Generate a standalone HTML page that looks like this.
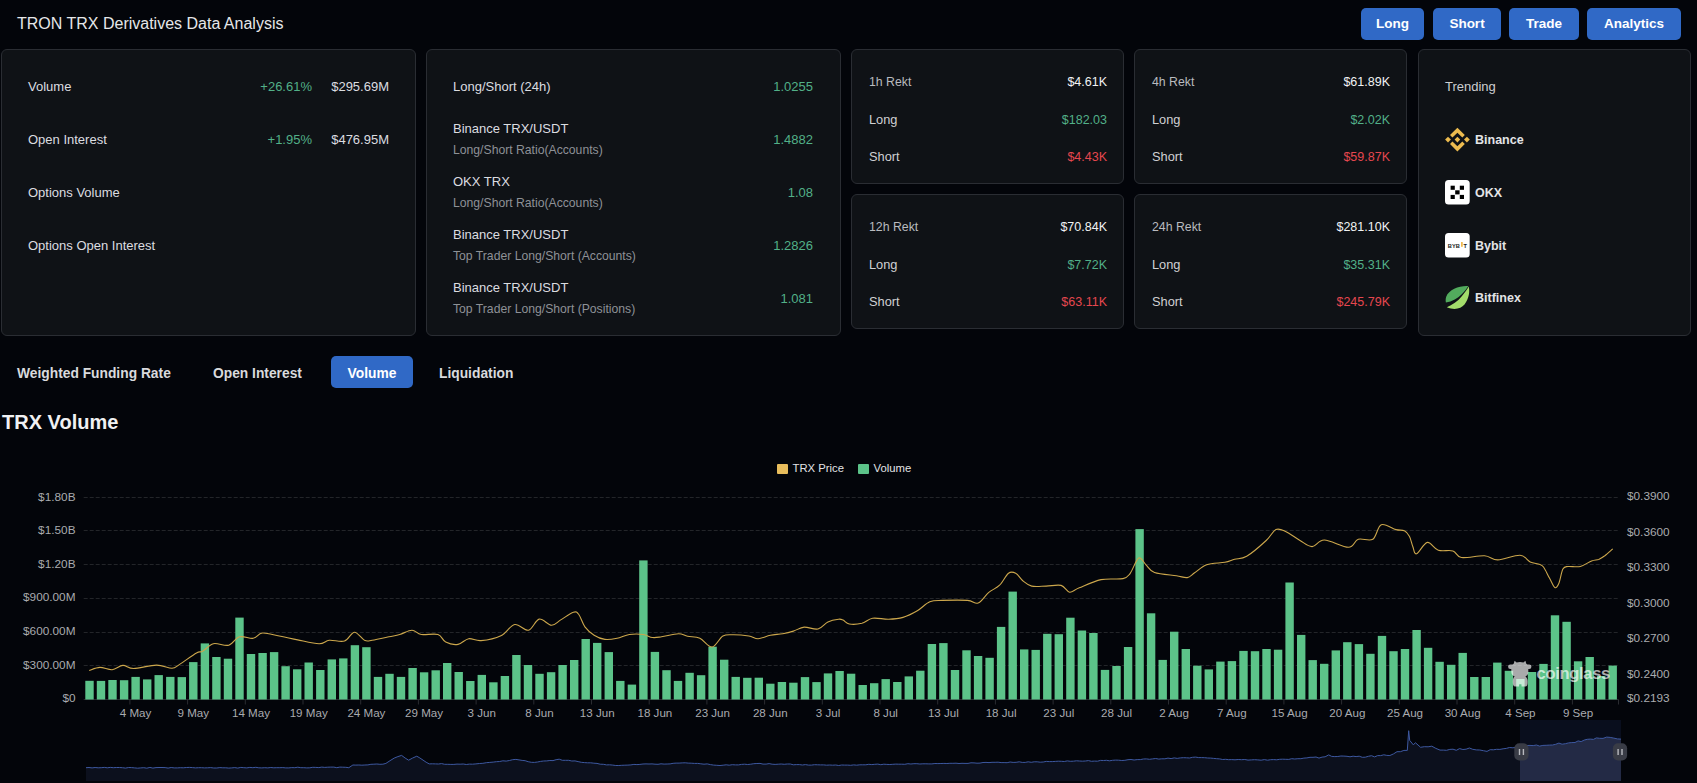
<!DOCTYPE html>
<html><head><meta charset="utf-8">
<style>
*{box-sizing:border-box;margin:0;padding:0}
html,body{width:1697px;height:783px;overflow:hidden;background:#03050a;font-family:"Liberation Sans",sans-serif;color:#dfe0e2}
.abs{position:absolute;white-space:nowrap}
.title{left:17px;top:14px;font-size:16px;color:#e6e7e9;line-height:20px}
.btn{position:absolute;top:8px;height:32px;background:#3069c6;border-radius:5px;color:#fff;font-weight:700;font-size:13.5px;line-height:32px;text-align:center}
.panel{position:absolute;background:#0f1216;border:1px solid #2a2d33;border-radius:6px}
.lbl{font-size:13px;color:#dcdde0;line-height:16px}
.sub{font-size:12.2px;color:#8e9196;line-height:16px}
.grn{color:#52b088}
.red{color:#e5474f}
.r{text-align:right}
.rt{font-size:12.3px;color:#b9bbbf;line-height:16px}
.rl{font-size:12.8px;color:#cfd0d3;line-height:16px}
.rv{font-size:12.5px;line-height:16px;text-align:right}
.wv{color:#f1f2f3}
.tab{position:absolute;top:357.5px;height:32px;line-height:32px;font-size:13.8px;font-weight:700;color:#d9dadd;white-space:nowrap}
.tr{position:absolute;left:1475px;font-size:12.5px;font-weight:700;color:#e3e4e6;line-height:16px}
.ax{position:absolute;font-size:11.8px;color:#a9abaf;line-height:14px;white-space:nowrap}
.axl{width:60px;left:15.5px;text-align:right}
.axr{left:1627px}
.xl{position:absolute;top:705.5px;font-size:11.6px;color:#a9abaf;line-height:14px;white-space:nowrap;width:60px;text-align:center}
</style></head><body>
<div class="abs title">TRON TRX Derivatives Data Analysis</div>
<div class="btn" style="left:1361px;width:63px">Long</div>
<div class="btn" style="left:1433px;width:68px">Short</div>
<div class="btn" style="left:1509px;width:70px">Trade</div>
<div class="btn" style="left:1587px;width:94px">Analytics</div>

<!-- panel 1 -->
<div class="panel" style="left:1px;top:49px;width:415px;height:287px"></div>
<div class="abs lbl" style="left:28px;top:79px">Volume</div>
<div class="abs lbl grn" style="left:200px;width:112px;top:79px;text-align:right">+26.61%</div>
<div class="abs lbl" style="left:300px;width:89px;top:79px;text-align:right">$295.69M</div>
<div class="abs lbl" style="left:28px;top:132px">Open Interest</div>
<div class="abs lbl grn" style="left:200px;width:112px;top:132px;text-align:right">+1.95%</div>
<div class="abs lbl" style="left:300px;width:89px;top:132px;text-align:right">$476.95M</div>
<div class="abs lbl" style="left:28px;top:185px">Options Volume</div>
<div class="abs lbl" style="left:28px;top:238px">Options Open Interest</div>

<!-- panel 2 -->
<div class="panel" style="left:426px;top:49px;width:415px;height:287px"></div>
<div class="abs lbl" style="left:453px;top:79px">Long/Short (24h)</div>
<div class="abs lbl grn r" style="left:700px;width:113px;top:79px">1.0255</div>
<div class="abs lbl" style="left:453px;top:121px">Binance TRX/USDT</div>
<div class="abs sub" style="left:453px;top:142px">Long/Short Ratio(Accounts)</div>
<div class="abs lbl grn r" style="left:700px;width:113px;top:132px">1.4882</div>
<div class="abs lbl" style="left:453px;top:174px">OKX TRX</div>
<div class="abs sub" style="left:453px;top:195px">Long/Short Ratio(Accounts)</div>
<div class="abs lbl grn r" style="left:700px;width:113px;top:185px">1.08</div>
<div class="abs lbl" style="left:453px;top:227px">Binance TRX/USDT</div>
<div class="abs sub" style="left:453px;top:248px">Top Trader Long/Short (Accounts)</div>
<div class="abs lbl grn r" style="left:700px;width:113px;top:238px">1.2826</div>
<div class="abs lbl" style="left:453px;top:280px">Binance TRX/USDT</div>
<div class="abs sub" style="left:453px;top:301px">Top Trader Long/Short (Positions)</div>
<div class="abs lbl grn r" style="left:700px;width:113px;top:291px">1.081</div>

<div class="panel" style="left:851px;top:49px;width:273px;height:135px"></div><div class="abs rt" style="left:869px;top:74.0px">1h Rekt</div><div class="abs rv wv" style="left:907px;width:200px;top:74.0px">$4.61K</div><div class="abs rl" style="left:869px;top:111.6px">Long</div><div class="abs rv grn" style="left:907px;width:200px;top:111.6px">$182.03</div><div class="abs rl" style="left:869px;top:149.2px">Short</div><div class="abs rv red" style="left:907px;width:200px;top:149.2px">$4.43K</div><div class="panel" style="left:1134px;top:49px;width:273px;height:135px"></div><div class="abs rt" style="left:1152px;top:74.0px">4h Rekt</div><div class="abs rv wv" style="left:1190px;width:200px;top:74.0px">$61.89K</div><div class="abs rl" style="left:1152px;top:111.6px">Long</div><div class="abs rv grn" style="left:1190px;width:200px;top:111.6px">$2.02K</div><div class="abs rl" style="left:1152px;top:149.2px">Short</div><div class="abs rv red" style="left:1190px;width:200px;top:149.2px">$59.87K</div><div class="panel" style="left:851px;top:194px;width:273px;height:135px"></div><div class="abs rt" style="left:869px;top:219.0px">12h Rekt</div><div class="abs rv wv" style="left:907px;width:200px;top:219.0px">$70.84K</div><div class="abs rl" style="left:869px;top:256.6px">Long</div><div class="abs rv grn" style="left:907px;width:200px;top:256.6px">$7.72K</div><div class="abs rl" style="left:869px;top:294.2px">Short</div><div class="abs rv red" style="left:907px;width:200px;top:294.2px">$63.11K</div><div class="panel" style="left:1134px;top:194px;width:273px;height:135px"></div><div class="abs rt" style="left:1152px;top:219.0px">24h Rekt</div><div class="abs rv wv" style="left:1190px;width:200px;top:219.0px">$281.10K</div><div class="abs rl" style="left:1152px;top:256.6px">Long</div><div class="abs rv grn" style="left:1190px;width:200px;top:256.6px">$35.31K</div><div class="abs rl" style="left:1152px;top:294.2px">Short</div><div class="abs rv red" style="left:1190px;width:200px;top:294.2px">$245.79K</div>

<!-- trending -->
<div class="panel" style="left:1418px;top:49px;width:273px;height:287px"></div>
<div class="abs lbl" style="left:1445px;top:79px;color:#cdced1">Trending</div>
<svg style="position:absolute;left:1443px;top:125px" width="30" height="30" viewBox="0 0 30 30">
<g fill="#ecbb4f">
<path d="M14.4 2.7 L21.8 10.1 L19.35 12.6 L14.4 7.75 L9.45 12.6 L7 10.1 Z"/>
<path d="M14.4 26.4 L21.8 19.0 L19.35 16.5 L14.4 21.35 L9.45 16.5 L7 19.0 Z"/>
<path d="M5 11.7 L7.9 14.6 L5 17.5 L2.1 14.6 Z"/>
<path d="M23.9 11.7 L26.8 14.6 L23.9 17.5 L21 14.6 Z"/>
<path d="M14.4 11.8 L17.2 14.6 L14.4 17.4 L11.6 14.6 Z"/>
</g></svg>
<div class="tr" style="top:132px">Binance</div>
<svg style="position:absolute;left:1445.1px;top:180.1px" width="25" height="25" viewBox="0 0 25 25">
<rect x="0" y="0" width="24.7" height="24.5" rx="3.5" fill="#fff"/>
<g fill="#000"><rect x="5.6" y="5.7" width="4.2" height="4.1"/><rect x="14.8" y="5.7" width="4.2" height="4.1"/><rect x="10.2" y="10.3" width="4.4" height="4.1"/><rect x="5.6" y="14.9" width="4.2" height="4.1"/><rect x="14.8" y="14.9" width="4.2" height="4.1"/></g>
</svg>
<div class="tr" style="top:184.5px">OKX</div>
<svg style="position:absolute;left:1445.1px;top:233.1px" width="25" height="25" viewBox="0 0 25 25">
<rect x="0" y="0" width="24.7" height="24.5" rx="3.5" fill="#fff"/>
<text x="2.8" y="14.9" font-family="Liberation Sans" font-size="5.6" font-weight="700" fill="#1a1a1a" textLength="12" lengthAdjust="spacingAndGlyphs">BYB</text>
<rect x="16.1" y="9" width="1.6" height="4.8" fill="#f0b43c"/>
<text x="18.4" y="14.9" font-family="Liberation Sans" font-size="5.6" font-weight="700" fill="#1a1a1a">T</text>
</svg>
<div class="tr" style="top:237.5px">Bybit</div>
<svg style="position:absolute;left:1443px;top:283px" width="30" height="30" viewBox="0 0 30 30">
<path d="M25.3 3.1 C17 2.5 6 6 3.1 14 C2.5 16 2.6 18 2.9 19.6 C9 18.5 15 15.5 19 11 C22 8 24 5.5 25.3 3.1 Z" fill="#52ab5d"/>
<path d="M25.7 3.6 C26.8 8 26.5 15 21.5 21.5 C18 25.5 12 27.5 3.8 24.3 C9 22 15 18.5 19 13 C22 9.5 24.5 6 25.7 3.6 Z" fill="#a3dd6b"/>
</svg>
<div class="tr" style="top:290px">Bitfinex</div>

<!-- tabs -->
<div class="tab" style="left:17px">Weighted Funding Rate</div>
<div class="tab" style="left:213px">Open Interest</div>
<div class="abs" style="left:331px;top:356px;width:82px;height:32px;background:#3069c6;border-radius:5px"></div><div class="tab" style="left:331px;width:82px;color:#fff;text-align:center">Volume</div>
<div class="tab" style="left:439px">Liquidation</div>
<div class="abs" style="left:2px;top:408px;font-size:20px;font-weight:700;color:#f0f1f3;line-height:28px">TRX Volume</div>

<!-- legend -->
<div class="abs" style="left:777px;top:463.5px;width:10.5px;height:10.5px;background:#e8bd5c;border-radius:1px"></div>
<div class="abs" style="left:792.5px;top:461px;font-size:11.3px;color:#e2e3e5;line-height:14px">TRX Price</div>
<div class="abs" style="left:858px;top:463.5px;width:10.5px;height:10.5px;background:#5cc389;border-radius:1px"></div>
<div class="abs" style="left:873.5px;top:461px;font-size:11.3px;color:#e2e3e5;line-height:14px">Volume</div>

<!-- axes -->
<div class="ax axl" style="top:489.5px">$1.80B</div>
<div class="ax axl" style="top:523px">$1.50B</div>
<div class="ax axl" style="top:556.5px">$1.20B</div>
<div class="ax axl" style="top:590px">$900.00M</div>
<div class="ax axl" style="top:623.5px">$600.00M</div>
<div class="ax axl" style="top:657.5px">$300.00M</div>
<div class="ax axl" style="top:691px">$0</div>
<div class="ax axr" style="top:489px">$0.3900</div>
<div class="ax axr" style="top:524.5px">$0.3600</div>
<div class="ax axr" style="top:560px">$0.3300</div>
<div class="ax axr" style="top:595.5px">$0.3000</div>
<div class="ax axr" style="top:631px">$0.2700</div>
<div class="ax axr" style="top:666.5px">$0.2400</div>
<div class="ax axr" style="top:691px">$0.2193</div>

<svg width="1697" height="783" style="position:absolute;left:0;top:0">
<line x1="83.7" y1="497.5" x2="1618.5" y2="497.5" stroke="#232529" stroke-width="1" stroke-dasharray="4,2"/>
<line x1="83.7" y1="530.5" x2="1618.5" y2="530.5" stroke="#232529" stroke-width="1" stroke-dasharray="4,2"/>
<line x1="83.7" y1="564.5" x2="1618.5" y2="564.5" stroke="#232529" stroke-width="1" stroke-dasharray="4,2"/>
<line x1="83.7" y1="598.5" x2="1618.5" y2="598.5" stroke="#232529" stroke-width="1" stroke-dasharray="4,2"/>
<line x1="83.7" y1="632.5" x2="1618.5" y2="632.5" stroke="#232529" stroke-width="1" stroke-dasharray="4,2"/>
<line x1="83.7" y1="665.5" x2="1618.5" y2="665.5" stroke="#232529" stroke-width="1" stroke-dasharray="4,2"/>
<line x1="83.7" y1="699.5" x2="1618.5" y2="699.5" stroke="#2a2c31" stroke-width="1"/>
<line x1="129.9" y1="699.5" x2="129.9" y2="704.5" stroke="#2a2c31" stroke-width="1"/>
<line x1="187.6" y1="699.5" x2="187.6" y2="704.5" stroke="#2a2c31" stroke-width="1"/>
<line x1="245.3" y1="699.5" x2="245.3" y2="704.5" stroke="#2a2c31" stroke-width="1"/>
<line x1="303.0" y1="699.5" x2="303.0" y2="704.5" stroke="#2a2c31" stroke-width="1"/>
<line x1="360.7" y1="699.5" x2="360.7" y2="704.5" stroke="#2a2c31" stroke-width="1"/>
<line x1="418.4" y1="699.5" x2="418.4" y2="704.5" stroke="#2a2c31" stroke-width="1"/>
<line x1="476.1" y1="699.5" x2="476.1" y2="704.5" stroke="#2a2c31" stroke-width="1"/>
<line x1="533.8" y1="699.5" x2="533.8" y2="704.5" stroke="#2a2c31" stroke-width="1"/>
<line x1="591.5" y1="699.5" x2="591.5" y2="704.5" stroke="#2a2c31" stroke-width="1"/>
<line x1="649.2" y1="699.5" x2="649.2" y2="704.5" stroke="#2a2c31" stroke-width="1"/>
<line x1="706.9" y1="699.5" x2="706.9" y2="704.5" stroke="#2a2c31" stroke-width="1"/>
<line x1="764.6" y1="699.5" x2="764.6" y2="704.5" stroke="#2a2c31" stroke-width="1"/>
<line x1="822.3" y1="699.5" x2="822.3" y2="704.5" stroke="#2a2c31" stroke-width="1"/>
<line x1="880.0" y1="699.5" x2="880.0" y2="704.5" stroke="#2a2c31" stroke-width="1"/>
<line x1="937.7" y1="699.5" x2="937.7" y2="704.5" stroke="#2a2c31" stroke-width="1"/>
<line x1="995.4" y1="699.5" x2="995.4" y2="704.5" stroke="#2a2c31" stroke-width="1"/>
<line x1="1053.1" y1="699.5" x2="1053.1" y2="704.5" stroke="#2a2c31" stroke-width="1"/>
<line x1="1110.8" y1="699.5" x2="1110.8" y2="704.5" stroke="#2a2c31" stroke-width="1"/>
<line x1="1168.5" y1="699.5" x2="1168.5" y2="704.5" stroke="#2a2c31" stroke-width="1"/>
<line x1="1226.2" y1="699.5" x2="1226.2" y2="704.5" stroke="#2a2c31" stroke-width="1"/>
<line x1="1283.9" y1="699.5" x2="1283.9" y2="704.5" stroke="#2a2c31" stroke-width="1"/>
<line x1="1341.6" y1="699.5" x2="1341.6" y2="704.5" stroke="#2a2c31" stroke-width="1"/>
<line x1="1399.3" y1="699.5" x2="1399.3" y2="704.5" stroke="#2a2c31" stroke-width="1"/>
<line x1="1457.0" y1="699.5" x2="1457.0" y2="704.5" stroke="#2a2c31" stroke-width="1"/>
<line x1="1514.7" y1="699.5" x2="1514.7" y2="704.5" stroke="#2a2c31" stroke-width="1"/>
<line x1="1572.4" y1="699.5" x2="1572.4" y2="704.5" stroke="#2a2c31" stroke-width="1"/>
<line x1="1618.5" y1="699.5" x2="1618.5" y2="704.5" stroke="#2a2c31" stroke-width="1"/>
<rect x="85.3" y="680.8" width="8.4" height="18.7" fill="#5cc389"/>
<rect x="96.8" y="680.9" width="8.4" height="18.6" fill="#5cc389"/>
<rect x="108.3" y="680.0" width="8.4" height="19.5" fill="#5cc389"/>
<rect x="119.9" y="680.2" width="8.4" height="19.3" fill="#5cc389"/>
<rect x="131.4" y="676.9" width="8.4" height="22.6" fill="#5cc389"/>
<rect x="143.0" y="679.4" width="8.4" height="20.1" fill="#5cc389"/>
<rect x="154.5" y="675.1" width="8.4" height="24.4" fill="#5cc389"/>
<rect x="166.1" y="676.9" width="8.4" height="22.6" fill="#5cc389"/>
<rect x="177.6" y="677.1" width="8.4" height="22.4" fill="#5cc389"/>
<rect x="189.1" y="662.1" width="8.4" height="37.4" fill="#5cc389"/>
<rect x="200.7" y="643.4" width="8.4" height="56.1" fill="#5cc389"/>
<rect x="212.2" y="657.0" width="8.4" height="42.5" fill="#5cc389"/>
<rect x="223.8" y="658.7" width="8.4" height="40.8" fill="#5cc389"/>
<rect x="235.3" y="617.6" width="8.4" height="81.9" fill="#5cc389"/>
<rect x="246.8" y="654.0" width="8.4" height="45.5" fill="#5cc389"/>
<rect x="258.4" y="653.0" width="8.4" height="46.5" fill="#5cc389"/>
<rect x="269.9" y="652.1" width="8.4" height="47.4" fill="#5cc389"/>
<rect x="281.4" y="666.2" width="8.4" height="33.3" fill="#5cc389"/>
<rect x="293.0" y="669.3" width="8.4" height="30.2" fill="#5cc389"/>
<rect x="304.5" y="662.5" width="8.4" height="37.0" fill="#5cc389"/>
<rect x="316.1" y="670.0" width="8.4" height="29.5" fill="#5cc389"/>
<rect x="327.6" y="659.4" width="8.4" height="40.1" fill="#5cc389"/>
<rect x="339.1" y="658.4" width="8.4" height="41.1" fill="#5cc389"/>
<rect x="350.7" y="645.2" width="8.4" height="54.3" fill="#5cc389"/>
<rect x="362.2" y="647.2" width="8.4" height="52.3" fill="#5cc389"/>
<rect x="373.8" y="676.9" width="8.4" height="22.6" fill="#5cc389"/>
<rect x="385.3" y="673.8" width="8.4" height="25.7" fill="#5cc389"/>
<rect x="396.8" y="676.9" width="8.4" height="22.6" fill="#5cc389"/>
<rect x="408.4" y="668.0" width="8.4" height="31.5" fill="#5cc389"/>
<rect x="419.9" y="672.3" width="8.4" height="27.2" fill="#5cc389"/>
<rect x="431.5" y="670.3" width="8.4" height="29.2" fill="#5cc389"/>
<rect x="443.0" y="663.0" width="8.4" height="36.5" fill="#5cc389"/>
<rect x="454.5" y="672.0" width="8.4" height="27.5" fill="#5cc389"/>
<rect x="466.1" y="681.0" width="8.4" height="18.5" fill="#5cc389"/>
<rect x="477.6" y="674.9" width="8.4" height="24.6" fill="#5cc389"/>
<rect x="489.2" y="682.3" width="8.4" height="17.2" fill="#5cc389"/>
<rect x="500.7" y="676.0" width="8.4" height="23.5" fill="#5cc389"/>
<rect x="512.2" y="655.0" width="8.4" height="44.5" fill="#5cc389"/>
<rect x="523.8" y="665.0" width="8.4" height="34.5" fill="#5cc389"/>
<rect x="535.3" y="673.8" width="8.4" height="25.7" fill="#5cc389"/>
<rect x="546.9" y="672.2" width="8.4" height="27.3" fill="#5cc389"/>
<rect x="558.4" y="665.0" width="8.4" height="34.5" fill="#5cc389"/>
<rect x="570.0" y="660.0" width="8.4" height="39.5" fill="#5cc389"/>
<rect x="581.5" y="639.0" width="8.4" height="60.5" fill="#5cc389"/>
<rect x="593.0" y="642.9" width="8.4" height="56.6" fill="#5cc389"/>
<rect x="604.6" y="652.1" width="8.4" height="47.4" fill="#5cc389"/>
<rect x="616.1" y="680.9" width="8.4" height="18.6" fill="#5cc389"/>
<rect x="627.7" y="684.6" width="8.4" height="14.9" fill="#5cc389"/>
<rect x="639.2" y="560.4" width="8.4" height="139.1" fill="#5cc389"/>
<rect x="650.7" y="651.9" width="8.4" height="47.6" fill="#5cc389"/>
<rect x="662.3" y="670.2" width="8.4" height="29.3" fill="#5cc389"/>
<rect x="673.8" y="680.9" width="8.4" height="18.6" fill="#5cc389"/>
<rect x="685.4" y="672.8" width="8.4" height="26.7" fill="#5cc389"/>
<rect x="696.9" y="675.2" width="8.4" height="24.3" fill="#5cc389"/>
<rect x="708.4" y="646.7" width="8.4" height="52.8" fill="#5cc389"/>
<rect x="720.0" y="659.7" width="8.4" height="39.8" fill="#5cc389"/>
<rect x="731.5" y="676.9" width="8.4" height="22.6" fill="#5cc389"/>
<rect x="743.1" y="677.8" width="8.4" height="21.7" fill="#5cc389"/>
<rect x="754.6" y="677.7" width="8.4" height="21.8" fill="#5cc389"/>
<rect x="766.1" y="683.7" width="8.4" height="15.8" fill="#5cc389"/>
<rect x="777.7" y="682.0" width="8.4" height="17.5" fill="#5cc389"/>
<rect x="789.2" y="682.7" width="8.4" height="16.8" fill="#5cc389"/>
<rect x="800.8" y="677.1" width="8.4" height="22.4" fill="#5cc389"/>
<rect x="812.3" y="682.1" width="8.4" height="17.4" fill="#5cc389"/>
<rect x="823.8" y="673.4" width="8.4" height="26.1" fill="#5cc389"/>
<rect x="835.4" y="671.0" width="8.4" height="28.5" fill="#5cc389"/>
<rect x="846.9" y="673.7" width="8.4" height="25.8" fill="#5cc389"/>
<rect x="858.5" y="685.0" width="8.4" height="14.5" fill="#5cc389"/>
<rect x="870.0" y="683.2" width="8.4" height="16.3" fill="#5cc389"/>
<rect x="881.5" y="679.1" width="8.4" height="20.4" fill="#5cc389"/>
<rect x="893.1" y="682.0" width="8.4" height="17.5" fill="#5cc389"/>
<rect x="904.6" y="676.4" width="8.4" height="23.1" fill="#5cc389"/>
<rect x="916.1" y="670.7" width="8.4" height="28.8" fill="#5cc389"/>
<rect x="927.7" y="644.0" width="8.4" height="55.5" fill="#5cc389"/>
<rect x="939.2" y="643.1" width="8.4" height="56.4" fill="#5cc389"/>
<rect x="950.8" y="670.0" width="8.4" height="29.5" fill="#5cc389"/>
<rect x="962.3" y="650.3" width="8.4" height="49.2" fill="#5cc389"/>
<rect x="973.9" y="656.0" width="8.4" height="43.5" fill="#5cc389"/>
<rect x="985.4" y="657.8" width="8.4" height="41.7" fill="#5cc389"/>
<rect x="996.9" y="626.9" width="8.4" height="72.6" fill="#5cc389"/>
<rect x="1008.5" y="591.6" width="8.4" height="107.9" fill="#5cc389"/>
<rect x="1020.0" y="649.4" width="8.4" height="50.1" fill="#5cc389"/>
<rect x="1031.5" y="649.9" width="8.4" height="49.6" fill="#5cc389"/>
<rect x="1043.1" y="633.8" width="8.4" height="65.7" fill="#5cc389"/>
<rect x="1054.6" y="634.2" width="8.4" height="65.3" fill="#5cc389"/>
<rect x="1066.2" y="617.7" width="8.4" height="81.8" fill="#5cc389"/>
<rect x="1077.7" y="630.5" width="8.4" height="69.0" fill="#5cc389"/>
<rect x="1089.2" y="633.0" width="8.4" height="66.5" fill="#5cc389"/>
<rect x="1100.8" y="669.9" width="8.4" height="29.6" fill="#5cc389"/>
<rect x="1112.3" y="666.0" width="8.4" height="33.5" fill="#5cc389"/>
<rect x="1123.9" y="647.0" width="8.4" height="52.5" fill="#5cc389"/>
<rect x="1135.4" y="529.1" width="8.4" height="170.4" fill="#5cc389"/>
<rect x="1146.9" y="613.3" width="8.4" height="86.2" fill="#5cc389"/>
<rect x="1158.5" y="659.9" width="8.4" height="39.6" fill="#5cc389"/>
<rect x="1170.0" y="631.7" width="8.4" height="67.8" fill="#5cc389"/>
<rect x="1181.6" y="649.0" width="8.4" height="50.5" fill="#5cc389"/>
<rect x="1193.1" y="665.7" width="8.4" height="33.8" fill="#5cc389"/>
<rect x="1204.6" y="669.4" width="8.4" height="30.1" fill="#5cc389"/>
<rect x="1216.2" y="661.6" width="8.4" height="37.9" fill="#5cc389"/>
<rect x="1227.7" y="661.1" width="8.4" height="38.4" fill="#5cc389"/>
<rect x="1239.3" y="650.9" width="8.4" height="48.6" fill="#5cc389"/>
<rect x="1250.8" y="651.2" width="8.4" height="48.3" fill="#5cc389"/>
<rect x="1262.3" y="649.0" width="8.4" height="50.5" fill="#5cc389"/>
<rect x="1273.9" y="649.7" width="8.4" height="49.8" fill="#5cc389"/>
<rect x="1285.4" y="582.5" width="8.4" height="117.0" fill="#5cc389"/>
<rect x="1297.0" y="634.9" width="8.4" height="64.6" fill="#5cc389"/>
<rect x="1308.5" y="660.1" width="8.4" height="39.4" fill="#5cc389"/>
<rect x="1320.0" y="663.8" width="8.4" height="35.7" fill="#5cc389"/>
<rect x="1331.6" y="650.4" width="8.4" height="49.1" fill="#5cc389"/>
<rect x="1343.1" y="642.2" width="8.4" height="57.3" fill="#5cc389"/>
<rect x="1354.7" y="644.1" width="8.4" height="55.4" fill="#5cc389"/>
<rect x="1366.2" y="653.8" width="8.4" height="45.7" fill="#5cc389"/>
<rect x="1377.8" y="635.9" width="8.4" height="63.6" fill="#5cc389"/>
<rect x="1389.3" y="651.2" width="8.4" height="48.3" fill="#5cc389"/>
<rect x="1400.8" y="649.0" width="8.4" height="50.5" fill="#5cc389"/>
<rect x="1412.4" y="630.0" width="8.4" height="69.5" fill="#5cc389"/>
<rect x="1423.9" y="647.8" width="8.4" height="51.7" fill="#5cc389"/>
<rect x="1435.4" y="661.8" width="8.4" height="37.7" fill="#5cc389"/>
<rect x="1447.0" y="664.8" width="8.4" height="34.7" fill="#5cc389"/>
<rect x="1458.5" y="652.9" width="8.4" height="46.6" fill="#5cc389"/>
<rect x="1470.1" y="677.0" width="8.4" height="22.5" fill="#5cc389"/>
<rect x="1481.6" y="677.0" width="8.4" height="22.5" fill="#5cc389"/>
<rect x="1493.1" y="662.6" width="8.4" height="36.9" fill="#5cc389"/>
<rect x="1504.7" y="670.8" width="8.4" height="28.7" fill="#5cc389"/>
<rect x="1516.2" y="679.0" width="8.4" height="20.5" fill="#5cc389"/>
<rect x="1527.8" y="672.0" width="8.4" height="27.5" fill="#5cc389"/>
<rect x="1539.3" y="663.9" width="8.4" height="35.6" fill="#5cc389"/>
<rect x="1550.8" y="615.3" width="8.4" height="84.2" fill="#5cc389"/>
<rect x="1562.4" y="621.8" width="8.4" height="77.7" fill="#5cc389"/>
<rect x="1573.9" y="661.3" width="8.4" height="38.2" fill="#5cc389"/>
<rect x="1585.5" y="657.0" width="8.4" height="42.5" fill="#5cc389"/>
<rect x="1597.0" y="676.0" width="8.4" height="23.5" fill="#5cc389"/>
<rect x="1608.5" y="665.6" width="8.4" height="33.9" fill="#5cc389"/>
<path d="M89.2,670.5 C91.0,670.0 96.1,667.5 99.9,667.4 C103.7,667.3 108.4,670.0 112.2,669.7 C116.0,669.4 119.3,665.6 122.9,665.4 C126.5,665.2 128.0,668.5 133.6,668.5 C139.2,668.5 150.2,665.1 156.6,665.1 C163.0,665.1 168.2,668.3 172.0,668.2 C175.8,668.1 175.5,667.0 179.6,664.4 C183.7,661.8 192.7,655.1 196.5,652.9 C200.3,650.7 199.8,652.8 202.6,651.3 C205.4,649.8 209.1,644.7 213.4,643.7 C217.8,642.7 224.4,646.4 228.7,645.2 C233.0,644.1 235.3,637.9 239.4,636.8 C243.5,635.6 249.4,638.9 253.2,638.3 C257.0,637.7 258.0,633.4 262.4,633.0 C266.8,632.6 273.4,634.9 279.3,636.0 C285.2,637.1 291.1,638.6 297.7,639.9 C304.3,641.2 313.9,643.6 319.1,643.7 C324.4,643.8 325.0,640.8 329.2,640.3 C333.4,639.8 340.3,642.4 344.5,641.0 C348.7,639.6 351.2,632.3 354.5,632.2 C357.8,632.1 361.6,638.9 364.5,640.3 C367.4,641.6 368.0,640.9 372.1,640.3 C376.2,639.7 384.4,637.8 389.0,636.8 C393.6,635.8 395.9,635.6 399.7,634.5 C403.5,633.4 408.4,630.2 412.0,630.2 C415.6,630.2 416.9,633.8 421.2,634.5 C425.5,635.2 433.9,633.2 438.0,634.5 C442.1,635.8 442.4,640.5 445.7,642.1 C449.0,643.8 454.2,645.0 458.0,644.4 C461.8,643.8 464.9,639.3 468.7,638.7 C472.5,638.1 475.6,641.1 481.0,640.6 C486.4,640.1 495.3,638.4 500.9,635.7 C506.5,633.0 510.1,625.4 514.7,624.5 C519.3,623.6 524.4,631.1 528.5,630.2 C532.6,629.3 535.4,619.9 539.2,619.1 C543.0,618.3 547.9,625.2 551.5,625.3 C555.1,625.4 557.1,622.1 560.7,619.9 C564.4,617.7 570.4,613.1 573.4,612.2 C576.4,611.3 576.9,612.1 578.8,614.5 C580.7,616.9 582.3,623.3 584.9,626.8 C587.5,630.2 590.8,633.1 594.1,635.2 C597.4,637.3 601.1,638.9 604.9,639.4 C608.7,639.9 613.0,639.1 617.1,638.3 C621.2,637.5 625.0,635.1 629.4,634.5 C633.8,633.9 639.4,634.0 643.2,634.5 C647.0,635.0 649.3,637.1 652.4,637.5 C655.5,637.9 657.3,637.4 661.6,636.8 C665.9,636.2 674.1,633.8 678.4,633.7 C682.7,633.6 684.0,635.5 687.6,636.3 C691.2,637.1 695.8,636.5 699.9,638.3 C704.0,640.1 708.3,647.4 712.1,647.0 C715.9,646.6 719.3,638.0 722.9,636.0 C726.5,634.0 729.3,634.8 733.6,634.8 C737.9,634.8 744.8,635.4 748.9,636.0 C753.0,636.6 754.5,638.8 758.1,638.7 C761.7,638.6 766.3,636.0 770.4,635.2 C774.5,634.4 778.9,634.4 782.7,633.7 C786.5,633.0 789.8,632.2 793.4,631.1 C797.0,630.0 800.0,627.5 804.1,627.1 C808.2,626.8 814.0,629.9 818.0,629.0 C822.0,628.1 824.5,623.5 827.9,621.9 C831.3,620.3 836.1,619.5 838.6,619.2 C841.1,618.9 841.3,619.3 843.1,620.1 C844.9,620.9 846.2,623.5 849.3,624.0 C852.4,624.5 858.0,624.2 861.9,623.3 C865.8,622.3 868.1,619.0 872.6,618.3 C877.1,617.6 883.6,619.4 888.7,619.2 C893.8,619.1 898.2,618.8 903.0,617.4 C907.8,616.0 912.8,613.4 917.3,610.8 C921.8,608.2 925.6,603.5 929.8,601.8 C934.0,600.1 936.0,600.6 942.3,600.4 C948.6,600.2 961.4,599.9 967.4,600.4 C973.4,600.9 974.5,604.4 978.1,603.1 C981.7,601.8 985.2,595.4 988.8,592.4 C992.4,589.4 996.3,588.4 999.6,585.2 C1002.9,582.0 1005.8,575.2 1008.5,573.2 C1011.2,571.2 1013.3,572.0 1015.7,573.2 C1018.1,574.5 1020.1,578.6 1022.8,580.7 C1025.5,582.9 1027.8,585.2 1031.7,586.1 C1035.6,587.0 1041.2,586.2 1046.1,586.1 C1051.0,586.0 1057.2,584.4 1061.1,585.4 C1065.0,586.4 1066.6,591.8 1069.6,592.2 C1072.6,592.6 1074.0,589.9 1079.3,587.8 C1084.5,585.7 1093.8,581.1 1101.1,579.6 C1108.4,578.1 1118.2,579.7 1123.0,578.6 C1127.8,577.5 1127.6,576.7 1130.2,573.3 C1132.8,569.9 1136.1,559.4 1138.7,558.0 C1141.3,556.6 1143.4,562.4 1146.0,564.8 C1148.6,567.2 1149.4,570.7 1154.5,572.5 C1159.6,574.3 1170.9,574.9 1176.4,575.7 C1181.9,576.6 1184.3,578.1 1187.3,577.6 C1190.3,577.1 1191.4,574.9 1194.6,572.8 C1197.8,570.7 1201.7,566.5 1206.7,564.8 C1211.8,563.0 1220.2,563.2 1224.9,562.3 C1229.6,561.4 1231.0,560.2 1234.6,559.2 C1238.2,558.2 1241.4,559.4 1246.7,556.3 C1252.0,553.2 1261.3,545.0 1266.2,540.5 C1271.1,536.0 1272.7,531.1 1275.9,529.6 C1279.1,528.1 1281.6,529.7 1285.6,531.5 C1289.6,533.3 1295.6,538.0 1300.0,540.5 C1304.4,543.0 1308.0,546.7 1312.1,546.6 C1316.1,546.5 1318.2,539.9 1324.3,540.0 C1330.4,540.1 1342.8,547.4 1348.5,547.3 C1354.2,547.2 1354.2,540.6 1358.3,539.3 C1362.3,538.0 1369.0,541.7 1372.8,539.3 C1376.6,536.9 1377.4,526.3 1381.3,524.7 C1385.2,523.1 1392.1,528.6 1395.9,529.6 C1399.8,530.6 1402.1,529.6 1404.4,530.8 C1406.7,531.9 1408.1,533.9 1409.5,536.5 C1410.9,539.1 1411.6,543.6 1412.8,546.5 C1414.0,549.4 1414.1,554.5 1416.5,553.8 C1418.9,553.1 1423.8,543.0 1427.4,542.4 C1431.0,541.8 1434.0,548.8 1438.3,550.2 C1442.5,551.6 1449.1,549.7 1452.9,550.9 C1456.8,552.1 1456.1,556.7 1461.4,557.5 C1466.7,558.3 1478.4,555.4 1484.5,555.8 C1490.6,556.2 1491.9,560.0 1497.8,559.9 C1503.7,559.8 1514.6,555.0 1520.0,555.3 C1525.4,555.6 1527.0,560.4 1530.2,561.9 C1533.4,563.4 1537.2,563.4 1539.4,564.3 C1541.6,565.1 1541.8,564.7 1543.5,567.0 C1545.2,569.3 1547.7,574.9 1549.6,578.3 C1551.5,581.7 1553.3,586.6 1554.8,587.5 C1556.3,588.4 1557.4,586.5 1558.8,583.4 C1560.2,580.3 1561.4,571.9 1562.9,569.1 C1564.4,566.3 1565.1,566.9 1568.0,566.5 C1570.9,566.1 1576.4,567.4 1580.3,566.5 C1584.2,565.6 1588.5,562.1 1591.6,560.9 C1594.7,559.7 1596.5,560.2 1598.7,559.4 C1600.9,558.5 1602.5,557.5 1604.8,555.8 C1607.1,554.0 1611.5,550.0 1612.8,548.9" fill="none" stroke="#cca74c" stroke-width="1.1"/>
<defs><clipPath id="sel"><rect x="1520" y="715" width="101" height="70"/></clipPath></defs>
<path d="M86,781 L86.0,767.7 L89.0,767.5 L92.1,767.9 L95.1,767.5 L98.2,767.8 L101.2,767.7 L104.3,767.4 L107.3,767.8 L110.3,767.4 L113.4,767.7 L116.4,767.5 L119.5,767.5 L122.5,767.7 L125.5,768.1 L128.6,767.5 L131.6,767.6 L134.7,767.9 L137.7,768.2 L140.8,767.9 L143.8,767.7 L146.8,768.2 L149.9,767.4 L152.9,768.1 L156.0,767.6 L159.0,767.5 L162.0,767.5 L165.1,767.6 L168.1,768.1 L171.2,767.5 L174.2,767.9 L177.3,767.9 L180.3,767.7 L183.3,767.8 L186.4,767.5 L189.4,767.4 L192.5,767.6 L195.5,767.9 L198.5,767.7 L201.6,767.7 L204.6,767.9 L207.7,767.8 L210.7,767.6 L213.8,768.0 L216.8,768.0 L219.8,767.6 L222.8,767.8 L225.8,767.8 L228.8,768.1 L231.8,767.9 L234.8,767.6 L237.8,768.1 L240.8,767.4 L243.8,767.7 L246.8,767.9 L249.8,767.4 L252.8,767.7 L255.8,767.3 L258.8,767.8 L261.8,767.9 L264.8,767.7 L267.8,767.9 L270.8,767.5 L273.8,767.8 L276.8,767.7 L279.8,767.7 L282.8,767.6 L285.8,767.9 L288.8,767.9 L291.8,767.6 L294.8,767.7 L297.8,767.2 L300.8,767.7 L303.8,767.7 L306.8,767.9 L309.8,767.8 L312.8,767.3 L315.8,767.4 L318.8,767.6 L321.8,767.1 L324.8,767.4 L327.8,767.2 L330.8,767.1 L333.8,767.1 L336.8,767.7 L339.8,767.1 L342.8,767.2 L345.8,767.3 L348.8,767.7 L352.9,765.0 L355.9,765.1 L358.9,765.0 L361.9,765.2 L364.9,765.0 L367.9,764.9 L370.9,764.3 L373.9,764.2 L376.9,764.0 L379.9,764.3 L382.9,764.2 L385.9,763.4 L390.0,760.7 L394.2,758.1 L397.9,756.6 L401.6,755.4 L405.1,758.0 L408.6,760.2 L412.7,758.0 L416.8,756.2 L419.9,758.0 L423.0,760.1 L426.1,762.2 L429.2,763.9 L432.3,763.8 L435.4,763.9 L438.5,764.0 L441.6,763.6 L444.7,764.3 L447.8,764.3 L450.9,764.4 L453.9,764.4 L457.0,764.1 L460.1,764.2 L463.2,764.0 L466.3,764.5 L469.4,764.1 L472.5,764.2 L475.9,763.9 L479.4,763.5 L482.9,763.3 L486.3,762.7 L489.8,762.4 L493.2,762.1 L496.4,761.7 L499.7,761.5 L502.9,760.8 L506.2,761.1 L509.4,760.5 L512.7,759.7 L515.9,759.4 L519.0,759.9 L522.1,760.4 L525.1,760.7 L528.2,761.7 L531.3,762.3 L534.4,762.4 L537.5,762.0 L540.6,761.4 L543.7,761.0 L546.8,760.9 L549.9,760.5 L553.0,760.6 L556.1,759.7 L559.2,759.2 L562.4,760.3 L565.5,760.3 L568.7,760.3 L571.8,761.0 L575.0,760.9 L578.1,761.6 L581.3,762.3 L584.4,762.6 L587.6,762.8 L590.7,762.8 L593.9,763.2 L597.0,763.4 L600.2,764.2 L603.3,764.3 L606.5,764.9 L609.6,764.8 L612.8,765.1 L615.8,765.5 L618.8,765.5 L621.8,765.3 L624.9,765.2 L627.9,765.1 L630.9,764.9 L633.9,764.4 L636.9,764.6 L639.9,764.4 L643.0,764.0 L646.0,763.9 L649.0,764.0 L652.0,763.9 L655.0,764.2 L658.0,764.3 L661.0,763.8 L664.1,764.1 L667.1,764.0 L670.1,763.9 L673.1,763.3 L676.1,763.1 L679.1,763.1 L682.2,762.9 L685.2,762.8 L688.2,763.1 L691.2,763.2 L694.4,763.4 L697.6,763.4 L700.8,763.8 L704.0,764.2 L707.2,763.9 L710.4,764.6 L713.6,765.1 L716.8,765.3 L720.0,765.5 L723.1,765.2 L726.2,764.8 L729.2,765.2 L732.3,764.7 L735.4,764.9 L738.5,764.9 L741.5,764.4 L744.6,764.2 L747.7,764.5 L750.8,764.2 L753.8,763.7 L756.9,763.5 L760.0,763.4 L763.0,764.1 L766.1,764.1 L769.1,763.6 L772.1,764.2 L775.1,764.4 L778.2,764.2 L781.2,764.0 L784.2,764.3 L787.3,764.0 L790.3,764.0 L793.3,764.8 L796.4,764.6 L799.4,764.6 L802.4,765.0 L805.4,764.6 L808.5,765.1 L811.5,765.1 L814.5,764.7 L817.6,764.8 L820.6,764.9 L823.6,764.9 L826.6,765.2 L829.7,765.0 L832.7,765.2 L835.7,765.0 L838.7,765.5 L841.7,765.0 L844.7,765.1 L847.7,765.1 L850.7,765.3 L853.7,764.9 L856.7,765.2 L859.8,764.8 L862.8,764.8 L865.8,764.8 L868.8,764.3 L871.8,764.6 L874.8,764.3 L877.8,764.1 L880.8,764.7 L883.8,764.2 L886.8,764.4 L889.8,764.5 L892.8,764.3 L895.8,764.1 L898.8,764.2 L901.8,764.2 L904.8,764.3 L907.9,763.7 L910.9,764.0 L913.9,763.7 L916.9,763.7 L919.9,764.0 L922.9,763.8 L925.9,763.8 L928.9,763.9 L931.9,763.9 L934.9,763.5 L937.9,763.6 L940.9,763.5 L943.9,763.4 L946.9,763.5 L949.9,763.3 L952.9,763.3 L956.0,763.2 L959.0,763.5 L962.0,763.3 L965.0,763.4 L968.0,763.4 L971.0,762.8 L974.0,762.9 L977.0,763.2 L980.0,763.1 L983.0,762.5 L986.0,762.4 L989.0,762.6 L992.0,762.3 L995.1,762.3 L998.1,762.2 L1001.1,762.6 L1004.1,762.6 L1007.1,762.7 L1010.1,762.0 L1013.1,762.4 L1016.1,762.3 L1019.2,761.8 L1022.2,762.4 L1025.2,762.4 L1028.2,761.8 L1031.2,762.3 L1034.2,761.8 L1037.2,761.8 L1040.2,762.2 L1043.2,762.0 L1046.3,761.4 L1049.3,761.6 L1052.3,761.6 L1055.3,761.4 L1058.3,761.2 L1061.3,761.3 L1064.3,761.5 L1067.3,760.9 L1070.3,761.3 L1073.4,761.2 L1076.4,760.8 L1079.4,761.0 L1082.4,761.2 L1085.4,761.0 L1088.4,760.6 L1091.4,761.3 L1094.4,761.1 L1097.5,761.2 L1100.5,760.4 L1103.5,760.5 L1106.5,760.3 L1109.5,760.8 L1112.6,760.3 L1115.7,760.1 L1118.7,760.2 L1121.8,760.5 L1124.9,760.3 L1128.0,759.7 L1131.0,759.5 L1134.1,760.0 L1137.2,759.6 L1140.3,759.6 L1143.4,759.0 L1146.4,758.9 L1149.5,759.3 L1152.6,758.9 L1155.7,758.5 L1158.8,759.1 L1161.8,758.8 L1164.9,758.8 L1168.0,758.1 L1171.1,758.6 L1174.2,757.9 L1177.2,758.4 L1180.3,757.9 L1183.4,757.7 L1186.5,757.8 L1189.5,758.0 L1192.6,757.3 L1195.7,757.1 L1198.7,757.6 L1201.7,757.6 L1204.7,757.7 L1207.7,758.0 L1210.7,758.1 L1213.7,758.4 L1216.7,758.7 L1219.7,758.9 L1222.7,759.5 L1225.7,759.3 L1228.7,759.7 L1231.7,759.6 L1235.0,759.8 L1238.2,759.5 L1241.5,759.7 L1244.8,759.5 L1248.0,760.1 L1251.3,759.9 L1254.5,759.7 L1257.8,759.9 L1261.1,760.2 L1264.3,759.6 L1267.6,760.2 L1270.6,759.7 L1273.7,759.6 L1276.7,759.8 L1279.7,759.3 L1282.7,759.2 L1285.8,759.3 L1288.8,759.4 L1291.8,758.7 L1294.8,759.0 L1297.9,758.7 L1300.9,758.7 L1303.9,758.1 L1306.9,757.9 L1310.0,757.3 L1313.0,757.3 L1316.0,757.0 L1319.0,758.1 L1322.1,757.1 L1325.1,756.8 L1328.7,754.9 L1331.7,756.4 L1334.8,756.6 L1337.8,756.5 L1340.9,756.0 L1343.9,756.1 L1347.0,756.3 L1350.0,756.8 L1353.1,756.2 L1356.1,756.6 L1359.2,756.2 L1362.3,757.3 L1365.3,757.2 L1368.4,756.3 L1371.5,755.7 L1374.6,756.9 L1377.6,755.6 L1380.7,755.6 L1383.8,754.8 L1386.8,755.4 L1389.9,755.5 L1393.5,753.9 L1397.0,751.7 L1400.4,751.7 L1403.9,750.4 L1407.3,750.4 L1408.7,730.7 L1409.7,740.4 L1413.4,744.9 L1415.4,742.7 L1420.6,747.3 L1424.3,746.7 L1428.1,746.8 L1431.8,746.2 L1435.9,748.4 L1440.0,750.1 L1443.3,750.1 L1446.5,750.3 L1449.8,749.4 L1453.0,749.2 L1456.3,750.3 L1459.6,748.6 L1462.9,749.5 L1466.1,749.2 L1469.4,748.0 L1472.7,749.3 L1476.3,749.9 L1479.8,750.0 L1483.4,750.7 L1487.0,751.4 L1490.2,749.7 L1493.4,749.8 L1496.6,749.3 L1499.9,749.4 L1503.1,748.8 L1506.3,748.4 L1509.5,747.5 L1512.9,747.8 L1516.3,747.2 L1519.8,747.0 L1523.2,746.0 L1526.6,745.5 L1530.0,745.4 L1533.2,745.6 L1536.4,745.0 L1539.6,746.1 L1542.9,745.4 L1546.1,745.3 L1549.3,745.1 L1552.5,745.0 L1555.7,744.3 L1558.9,743.1 L1562.1,744.2 L1565.4,743.7 L1568.6,742.9 L1571.8,742.6 L1575.0,742.5 L1578.1,740.9 L1581.1,741.6 L1584.2,740.1 L1587.2,739.3 L1590.3,739.1 L1593.4,739.4 L1596.4,737.9 L1599.5,738.3 L1603.0,738.4 L1606.6,737.1 L1610.2,737.4 L1613.8,738.1 L1617.4,738.9 L1621.0,739.1 L1621,781 Z" fill="#0c101d"/>
<rect x="1520" y="720" width="101" height="61" fill="#090e1d"/>
<path d="M86,781 L86.0,767.7 L89.0,767.5 L92.1,767.9 L95.1,767.5 L98.2,767.8 L101.2,767.7 L104.3,767.4 L107.3,767.8 L110.3,767.4 L113.4,767.7 L116.4,767.5 L119.5,767.5 L122.5,767.7 L125.5,768.1 L128.6,767.5 L131.6,767.6 L134.7,767.9 L137.7,768.2 L140.8,767.9 L143.8,767.7 L146.8,768.2 L149.9,767.4 L152.9,768.1 L156.0,767.6 L159.0,767.5 L162.0,767.5 L165.1,767.6 L168.1,768.1 L171.2,767.5 L174.2,767.9 L177.3,767.9 L180.3,767.7 L183.3,767.8 L186.4,767.5 L189.4,767.4 L192.5,767.6 L195.5,767.9 L198.5,767.7 L201.6,767.7 L204.6,767.9 L207.7,767.8 L210.7,767.6 L213.8,768.0 L216.8,768.0 L219.8,767.6 L222.8,767.8 L225.8,767.8 L228.8,768.1 L231.8,767.9 L234.8,767.6 L237.8,768.1 L240.8,767.4 L243.8,767.7 L246.8,767.9 L249.8,767.4 L252.8,767.7 L255.8,767.3 L258.8,767.8 L261.8,767.9 L264.8,767.7 L267.8,767.9 L270.8,767.5 L273.8,767.8 L276.8,767.7 L279.8,767.7 L282.8,767.6 L285.8,767.9 L288.8,767.9 L291.8,767.6 L294.8,767.7 L297.8,767.2 L300.8,767.7 L303.8,767.7 L306.8,767.9 L309.8,767.8 L312.8,767.3 L315.8,767.4 L318.8,767.6 L321.8,767.1 L324.8,767.4 L327.8,767.2 L330.8,767.1 L333.8,767.1 L336.8,767.7 L339.8,767.1 L342.8,767.2 L345.8,767.3 L348.8,767.7 L352.9,765.0 L355.9,765.1 L358.9,765.0 L361.9,765.2 L364.9,765.0 L367.9,764.9 L370.9,764.3 L373.9,764.2 L376.9,764.0 L379.9,764.3 L382.9,764.2 L385.9,763.4 L390.0,760.7 L394.2,758.1 L397.9,756.6 L401.6,755.4 L405.1,758.0 L408.6,760.2 L412.7,758.0 L416.8,756.2 L419.9,758.0 L423.0,760.1 L426.1,762.2 L429.2,763.9 L432.3,763.8 L435.4,763.9 L438.5,764.0 L441.6,763.6 L444.7,764.3 L447.8,764.3 L450.9,764.4 L453.9,764.4 L457.0,764.1 L460.1,764.2 L463.2,764.0 L466.3,764.5 L469.4,764.1 L472.5,764.2 L475.9,763.9 L479.4,763.5 L482.9,763.3 L486.3,762.7 L489.8,762.4 L493.2,762.1 L496.4,761.7 L499.7,761.5 L502.9,760.8 L506.2,761.1 L509.4,760.5 L512.7,759.7 L515.9,759.4 L519.0,759.9 L522.1,760.4 L525.1,760.7 L528.2,761.7 L531.3,762.3 L534.4,762.4 L537.5,762.0 L540.6,761.4 L543.7,761.0 L546.8,760.9 L549.9,760.5 L553.0,760.6 L556.1,759.7 L559.2,759.2 L562.4,760.3 L565.5,760.3 L568.7,760.3 L571.8,761.0 L575.0,760.9 L578.1,761.6 L581.3,762.3 L584.4,762.6 L587.6,762.8 L590.7,762.8 L593.9,763.2 L597.0,763.4 L600.2,764.2 L603.3,764.3 L606.5,764.9 L609.6,764.8 L612.8,765.1 L615.8,765.5 L618.8,765.5 L621.8,765.3 L624.9,765.2 L627.9,765.1 L630.9,764.9 L633.9,764.4 L636.9,764.6 L639.9,764.4 L643.0,764.0 L646.0,763.9 L649.0,764.0 L652.0,763.9 L655.0,764.2 L658.0,764.3 L661.0,763.8 L664.1,764.1 L667.1,764.0 L670.1,763.9 L673.1,763.3 L676.1,763.1 L679.1,763.1 L682.2,762.9 L685.2,762.8 L688.2,763.1 L691.2,763.2 L694.4,763.4 L697.6,763.4 L700.8,763.8 L704.0,764.2 L707.2,763.9 L710.4,764.6 L713.6,765.1 L716.8,765.3 L720.0,765.5 L723.1,765.2 L726.2,764.8 L729.2,765.2 L732.3,764.7 L735.4,764.9 L738.5,764.9 L741.5,764.4 L744.6,764.2 L747.7,764.5 L750.8,764.2 L753.8,763.7 L756.9,763.5 L760.0,763.4 L763.0,764.1 L766.1,764.1 L769.1,763.6 L772.1,764.2 L775.1,764.4 L778.2,764.2 L781.2,764.0 L784.2,764.3 L787.3,764.0 L790.3,764.0 L793.3,764.8 L796.4,764.6 L799.4,764.6 L802.4,765.0 L805.4,764.6 L808.5,765.1 L811.5,765.1 L814.5,764.7 L817.6,764.8 L820.6,764.9 L823.6,764.9 L826.6,765.2 L829.7,765.0 L832.7,765.2 L835.7,765.0 L838.7,765.5 L841.7,765.0 L844.7,765.1 L847.7,765.1 L850.7,765.3 L853.7,764.9 L856.7,765.2 L859.8,764.8 L862.8,764.8 L865.8,764.8 L868.8,764.3 L871.8,764.6 L874.8,764.3 L877.8,764.1 L880.8,764.7 L883.8,764.2 L886.8,764.4 L889.8,764.5 L892.8,764.3 L895.8,764.1 L898.8,764.2 L901.8,764.2 L904.8,764.3 L907.9,763.7 L910.9,764.0 L913.9,763.7 L916.9,763.7 L919.9,764.0 L922.9,763.8 L925.9,763.8 L928.9,763.9 L931.9,763.9 L934.9,763.5 L937.9,763.6 L940.9,763.5 L943.9,763.4 L946.9,763.5 L949.9,763.3 L952.9,763.3 L956.0,763.2 L959.0,763.5 L962.0,763.3 L965.0,763.4 L968.0,763.4 L971.0,762.8 L974.0,762.9 L977.0,763.2 L980.0,763.1 L983.0,762.5 L986.0,762.4 L989.0,762.6 L992.0,762.3 L995.1,762.3 L998.1,762.2 L1001.1,762.6 L1004.1,762.6 L1007.1,762.7 L1010.1,762.0 L1013.1,762.4 L1016.1,762.3 L1019.2,761.8 L1022.2,762.4 L1025.2,762.4 L1028.2,761.8 L1031.2,762.3 L1034.2,761.8 L1037.2,761.8 L1040.2,762.2 L1043.2,762.0 L1046.3,761.4 L1049.3,761.6 L1052.3,761.6 L1055.3,761.4 L1058.3,761.2 L1061.3,761.3 L1064.3,761.5 L1067.3,760.9 L1070.3,761.3 L1073.4,761.2 L1076.4,760.8 L1079.4,761.0 L1082.4,761.2 L1085.4,761.0 L1088.4,760.6 L1091.4,761.3 L1094.4,761.1 L1097.5,761.2 L1100.5,760.4 L1103.5,760.5 L1106.5,760.3 L1109.5,760.8 L1112.6,760.3 L1115.7,760.1 L1118.7,760.2 L1121.8,760.5 L1124.9,760.3 L1128.0,759.7 L1131.0,759.5 L1134.1,760.0 L1137.2,759.6 L1140.3,759.6 L1143.4,759.0 L1146.4,758.9 L1149.5,759.3 L1152.6,758.9 L1155.7,758.5 L1158.8,759.1 L1161.8,758.8 L1164.9,758.8 L1168.0,758.1 L1171.1,758.6 L1174.2,757.9 L1177.2,758.4 L1180.3,757.9 L1183.4,757.7 L1186.5,757.8 L1189.5,758.0 L1192.6,757.3 L1195.7,757.1 L1198.7,757.6 L1201.7,757.6 L1204.7,757.7 L1207.7,758.0 L1210.7,758.1 L1213.7,758.4 L1216.7,758.7 L1219.7,758.9 L1222.7,759.5 L1225.7,759.3 L1228.7,759.7 L1231.7,759.6 L1235.0,759.8 L1238.2,759.5 L1241.5,759.7 L1244.8,759.5 L1248.0,760.1 L1251.3,759.9 L1254.5,759.7 L1257.8,759.9 L1261.1,760.2 L1264.3,759.6 L1267.6,760.2 L1270.6,759.7 L1273.7,759.6 L1276.7,759.8 L1279.7,759.3 L1282.7,759.2 L1285.8,759.3 L1288.8,759.4 L1291.8,758.7 L1294.8,759.0 L1297.9,758.7 L1300.9,758.7 L1303.9,758.1 L1306.9,757.9 L1310.0,757.3 L1313.0,757.3 L1316.0,757.0 L1319.0,758.1 L1322.1,757.1 L1325.1,756.8 L1328.7,754.9 L1331.7,756.4 L1334.8,756.6 L1337.8,756.5 L1340.9,756.0 L1343.9,756.1 L1347.0,756.3 L1350.0,756.8 L1353.1,756.2 L1356.1,756.6 L1359.2,756.2 L1362.3,757.3 L1365.3,757.2 L1368.4,756.3 L1371.5,755.7 L1374.6,756.9 L1377.6,755.6 L1380.7,755.6 L1383.8,754.8 L1386.8,755.4 L1389.9,755.5 L1393.5,753.9 L1397.0,751.7 L1400.4,751.7 L1403.9,750.4 L1407.3,750.4 L1408.7,730.7 L1409.7,740.4 L1413.4,744.9 L1415.4,742.7 L1420.6,747.3 L1424.3,746.7 L1428.1,746.8 L1431.8,746.2 L1435.9,748.4 L1440.0,750.1 L1443.3,750.1 L1446.5,750.3 L1449.8,749.4 L1453.0,749.2 L1456.3,750.3 L1459.6,748.6 L1462.9,749.5 L1466.1,749.2 L1469.4,748.0 L1472.7,749.3 L1476.3,749.9 L1479.8,750.0 L1483.4,750.7 L1487.0,751.4 L1490.2,749.7 L1493.4,749.8 L1496.6,749.3 L1499.9,749.4 L1503.1,748.8 L1506.3,748.4 L1509.5,747.5 L1512.9,747.8 L1516.3,747.2 L1519.8,747.0 L1523.2,746.0 L1526.6,745.5 L1530.0,745.4 L1533.2,745.6 L1536.4,745.0 L1539.6,746.1 L1542.9,745.4 L1546.1,745.3 L1549.3,745.1 L1552.5,745.0 L1555.7,744.3 L1558.9,743.1 L1562.1,744.2 L1565.4,743.7 L1568.6,742.9 L1571.8,742.6 L1575.0,742.5 L1578.1,740.9 L1581.1,741.6 L1584.2,740.1 L1587.2,739.3 L1590.3,739.1 L1593.4,739.4 L1596.4,737.9 L1599.5,738.3 L1603.0,738.4 L1606.6,737.1 L1610.2,737.4 L1613.8,738.1 L1617.4,738.9 L1621.0,739.1 L1621,781 Z" fill="#232a45" clip-path="url(#sel)"/>
<path d="M86.0,767.7 L89.0,767.5 L92.1,767.9 L95.1,767.5 L98.2,767.8 L101.2,767.7 L104.3,767.4 L107.3,767.8 L110.3,767.4 L113.4,767.7 L116.4,767.5 L119.5,767.5 L122.5,767.7 L125.5,768.1 L128.6,767.5 L131.6,767.6 L134.7,767.9 L137.7,768.2 L140.8,767.9 L143.8,767.7 L146.8,768.2 L149.9,767.4 L152.9,768.1 L156.0,767.6 L159.0,767.5 L162.0,767.5 L165.1,767.6 L168.1,768.1 L171.2,767.5 L174.2,767.9 L177.3,767.9 L180.3,767.7 L183.3,767.8 L186.4,767.5 L189.4,767.4 L192.5,767.6 L195.5,767.9 L198.5,767.7 L201.6,767.7 L204.6,767.9 L207.7,767.8 L210.7,767.6 L213.8,768.0 L216.8,768.0 L219.8,767.6 L222.8,767.8 L225.8,767.8 L228.8,768.1 L231.8,767.9 L234.8,767.6 L237.8,768.1 L240.8,767.4 L243.8,767.7 L246.8,767.9 L249.8,767.4 L252.8,767.7 L255.8,767.3 L258.8,767.8 L261.8,767.9 L264.8,767.7 L267.8,767.9 L270.8,767.5 L273.8,767.8 L276.8,767.7 L279.8,767.7 L282.8,767.6 L285.8,767.9 L288.8,767.9 L291.8,767.6 L294.8,767.7 L297.8,767.2 L300.8,767.7 L303.8,767.7 L306.8,767.9 L309.8,767.8 L312.8,767.3 L315.8,767.4 L318.8,767.6 L321.8,767.1 L324.8,767.4 L327.8,767.2 L330.8,767.1 L333.8,767.1 L336.8,767.7 L339.8,767.1 L342.8,767.2 L345.8,767.3 L348.8,767.7 L352.9,765.0 L355.9,765.1 L358.9,765.0 L361.9,765.2 L364.9,765.0 L367.9,764.9 L370.9,764.3 L373.9,764.2 L376.9,764.0 L379.9,764.3 L382.9,764.2 L385.9,763.4 L390.0,760.7 L394.2,758.1 L397.9,756.6 L401.6,755.4 L405.1,758.0 L408.6,760.2 L412.7,758.0 L416.8,756.2 L419.9,758.0 L423.0,760.1 L426.1,762.2 L429.2,763.9 L432.3,763.8 L435.4,763.9 L438.5,764.0 L441.6,763.6 L444.7,764.3 L447.8,764.3 L450.9,764.4 L453.9,764.4 L457.0,764.1 L460.1,764.2 L463.2,764.0 L466.3,764.5 L469.4,764.1 L472.5,764.2 L475.9,763.9 L479.4,763.5 L482.9,763.3 L486.3,762.7 L489.8,762.4 L493.2,762.1 L496.4,761.7 L499.7,761.5 L502.9,760.8 L506.2,761.1 L509.4,760.5 L512.7,759.7 L515.9,759.4 L519.0,759.9 L522.1,760.4 L525.1,760.7 L528.2,761.7 L531.3,762.3 L534.4,762.4 L537.5,762.0 L540.6,761.4 L543.7,761.0 L546.8,760.9 L549.9,760.5 L553.0,760.6 L556.1,759.7 L559.2,759.2 L562.4,760.3 L565.5,760.3 L568.7,760.3 L571.8,761.0 L575.0,760.9 L578.1,761.6 L581.3,762.3 L584.4,762.6 L587.6,762.8 L590.7,762.8 L593.9,763.2 L597.0,763.4 L600.2,764.2 L603.3,764.3 L606.5,764.9 L609.6,764.8 L612.8,765.1 L615.8,765.5 L618.8,765.5 L621.8,765.3 L624.9,765.2 L627.9,765.1 L630.9,764.9 L633.9,764.4 L636.9,764.6 L639.9,764.4 L643.0,764.0 L646.0,763.9 L649.0,764.0 L652.0,763.9 L655.0,764.2 L658.0,764.3 L661.0,763.8 L664.1,764.1 L667.1,764.0 L670.1,763.9 L673.1,763.3 L676.1,763.1 L679.1,763.1 L682.2,762.9 L685.2,762.8 L688.2,763.1 L691.2,763.2 L694.4,763.4 L697.6,763.4 L700.8,763.8 L704.0,764.2 L707.2,763.9 L710.4,764.6 L713.6,765.1 L716.8,765.3 L720.0,765.5 L723.1,765.2 L726.2,764.8 L729.2,765.2 L732.3,764.7 L735.4,764.9 L738.5,764.9 L741.5,764.4 L744.6,764.2 L747.7,764.5 L750.8,764.2 L753.8,763.7 L756.9,763.5 L760.0,763.4 L763.0,764.1 L766.1,764.1 L769.1,763.6 L772.1,764.2 L775.1,764.4 L778.2,764.2 L781.2,764.0 L784.2,764.3 L787.3,764.0 L790.3,764.0 L793.3,764.8 L796.4,764.6 L799.4,764.6 L802.4,765.0 L805.4,764.6 L808.5,765.1 L811.5,765.1 L814.5,764.7 L817.6,764.8 L820.6,764.9 L823.6,764.9 L826.6,765.2 L829.7,765.0 L832.7,765.2 L835.7,765.0 L838.7,765.5 L841.7,765.0 L844.7,765.1 L847.7,765.1 L850.7,765.3 L853.7,764.9 L856.7,765.2 L859.8,764.8 L862.8,764.8 L865.8,764.8 L868.8,764.3 L871.8,764.6 L874.8,764.3 L877.8,764.1 L880.8,764.7 L883.8,764.2 L886.8,764.4 L889.8,764.5 L892.8,764.3 L895.8,764.1 L898.8,764.2 L901.8,764.2 L904.8,764.3 L907.9,763.7 L910.9,764.0 L913.9,763.7 L916.9,763.7 L919.9,764.0 L922.9,763.8 L925.9,763.8 L928.9,763.9 L931.9,763.9 L934.9,763.5 L937.9,763.6 L940.9,763.5 L943.9,763.4 L946.9,763.5 L949.9,763.3 L952.9,763.3 L956.0,763.2 L959.0,763.5 L962.0,763.3 L965.0,763.4 L968.0,763.4 L971.0,762.8 L974.0,762.9 L977.0,763.2 L980.0,763.1 L983.0,762.5 L986.0,762.4 L989.0,762.6 L992.0,762.3 L995.1,762.3 L998.1,762.2 L1001.1,762.6 L1004.1,762.6 L1007.1,762.7 L1010.1,762.0 L1013.1,762.4 L1016.1,762.3 L1019.2,761.8 L1022.2,762.4 L1025.2,762.4 L1028.2,761.8 L1031.2,762.3 L1034.2,761.8 L1037.2,761.8 L1040.2,762.2 L1043.2,762.0 L1046.3,761.4 L1049.3,761.6 L1052.3,761.6 L1055.3,761.4 L1058.3,761.2 L1061.3,761.3 L1064.3,761.5 L1067.3,760.9 L1070.3,761.3 L1073.4,761.2 L1076.4,760.8 L1079.4,761.0 L1082.4,761.2 L1085.4,761.0 L1088.4,760.6 L1091.4,761.3 L1094.4,761.1 L1097.5,761.2 L1100.5,760.4 L1103.5,760.5 L1106.5,760.3 L1109.5,760.8 L1112.6,760.3 L1115.7,760.1 L1118.7,760.2 L1121.8,760.5 L1124.9,760.3 L1128.0,759.7 L1131.0,759.5 L1134.1,760.0 L1137.2,759.6 L1140.3,759.6 L1143.4,759.0 L1146.4,758.9 L1149.5,759.3 L1152.6,758.9 L1155.7,758.5 L1158.8,759.1 L1161.8,758.8 L1164.9,758.8 L1168.0,758.1 L1171.1,758.6 L1174.2,757.9 L1177.2,758.4 L1180.3,757.9 L1183.4,757.7 L1186.5,757.8 L1189.5,758.0 L1192.6,757.3 L1195.7,757.1 L1198.7,757.6 L1201.7,757.6 L1204.7,757.7 L1207.7,758.0 L1210.7,758.1 L1213.7,758.4 L1216.7,758.7 L1219.7,758.9 L1222.7,759.5 L1225.7,759.3 L1228.7,759.7 L1231.7,759.6 L1235.0,759.8 L1238.2,759.5 L1241.5,759.7 L1244.8,759.5 L1248.0,760.1 L1251.3,759.9 L1254.5,759.7 L1257.8,759.9 L1261.1,760.2 L1264.3,759.6 L1267.6,760.2 L1270.6,759.7 L1273.7,759.6 L1276.7,759.8 L1279.7,759.3 L1282.7,759.2 L1285.8,759.3 L1288.8,759.4 L1291.8,758.7 L1294.8,759.0 L1297.9,758.7 L1300.9,758.7 L1303.9,758.1 L1306.9,757.9 L1310.0,757.3 L1313.0,757.3 L1316.0,757.0 L1319.0,758.1 L1322.1,757.1 L1325.1,756.8 L1328.7,754.9 L1331.7,756.4 L1334.8,756.6 L1337.8,756.5 L1340.9,756.0 L1343.9,756.1 L1347.0,756.3 L1350.0,756.8 L1353.1,756.2 L1356.1,756.6 L1359.2,756.2 L1362.3,757.3 L1365.3,757.2 L1368.4,756.3 L1371.5,755.7 L1374.6,756.9 L1377.6,755.6 L1380.7,755.6 L1383.8,754.8 L1386.8,755.4 L1389.9,755.5 L1393.5,753.9 L1397.0,751.7 L1400.4,751.7 L1403.9,750.4 L1407.3,750.4 L1408.7,730.7 L1409.7,740.4 L1413.4,744.9 L1415.4,742.7 L1420.6,747.3 L1424.3,746.7 L1428.1,746.8 L1431.8,746.2 L1435.9,748.4 L1440.0,750.1 L1443.3,750.1 L1446.5,750.3 L1449.8,749.4 L1453.0,749.2 L1456.3,750.3 L1459.6,748.6 L1462.9,749.5 L1466.1,749.2 L1469.4,748.0 L1472.7,749.3 L1476.3,749.9 L1479.8,750.0 L1483.4,750.7 L1487.0,751.4 L1490.2,749.7 L1493.4,749.8 L1496.6,749.3 L1499.9,749.4 L1503.1,748.8 L1506.3,748.4 L1509.5,747.5 L1512.9,747.8 L1516.3,747.2 L1519.8,747.0 L1523.2,746.0 L1526.6,745.5 L1530.0,745.4 L1533.2,745.6 L1536.4,745.0 L1539.6,746.1 L1542.9,745.4 L1546.1,745.3 L1549.3,745.1 L1552.5,745.0 L1555.7,744.3 L1558.9,743.1 L1562.1,744.2 L1565.4,743.7 L1568.6,742.9 L1571.8,742.6 L1575.0,742.5 L1578.1,740.9 L1581.1,741.6 L1584.2,740.1 L1587.2,739.3 L1590.3,739.1 L1593.4,739.4 L1596.4,737.9 L1599.5,738.3 L1603.0,738.4 L1606.6,737.1 L1610.2,737.4 L1613.8,738.1 L1617.4,738.9 L1621.0,739.1" fill="none" stroke="#3d58a0" stroke-width="1"/>
<rect x="1514.3" y="743.3" width="14.2" height="17.2" rx="5" fill="#393c46"/>
<rect x="1518.8" y="749" width="1.4" height="6" fill="#b8babf"/><rect x="1522.7" y="749" width="1.4" height="6" fill="#b8babf"/>
<rect x="1612.9" y="743.3" width="14.2" height="17.2" rx="5" fill="#393c46"/>
<rect x="1617.4" y="749" width="1.4" height="6" fill="#b8babf"/><rect x="1621.3" y="749" width="1.4" height="6" fill="#b8babf"/>
</svg>
<div class="xl" style="left:105.6px">4 May</div><div class="xl" style="left:163.3px">9 May</div><div class="xl" style="left:221.0px">14 May</div><div class="xl" style="left:278.7px">19 May</div><div class="xl" style="left:336.4px">24 May</div><div class="xl" style="left:394.1px">29 May</div><div class="xl" style="left:451.8px">3 Jun</div><div class="xl" style="left:509.5px">8 Jun</div><div class="xl" style="left:567.2px">13 Jun</div><div class="xl" style="left:624.9px">18 Jun</div><div class="xl" style="left:682.6px">23 Jun</div><div class="xl" style="left:740.3px">28 Jun</div><div class="xl" style="left:798.0px">3 Jul</div><div class="xl" style="left:855.7px">8 Jul</div><div class="xl" style="left:913.4px">13 Jul</div><div class="xl" style="left:971.1px">18 Jul</div><div class="xl" style="left:1028.8px">23 Jul</div><div class="xl" style="left:1086.5px">28 Jul</div><div class="xl" style="left:1144.2px">2 Aug</div><div class="xl" style="left:1201.9px">7 Aug</div><div class="xl" style="left:1259.6px">15 Aug</div><div class="xl" style="left:1317.3px">20 Aug</div><div class="xl" style="left:1375.0px">25 Aug</div><div class="xl" style="left:1432.7px">30 Aug</div><div class="xl" style="left:1490.4px">4 Sep</div><div class="xl" style="left:1548.1px">9 Sep</div>
<svg style="position:absolute;left:1504px;top:656px" width="32" height="32" viewBox="0 0 32 32">
<g fill="#fff" opacity="0.66">
<path d="M9.8 7.6 L10.6 4.8 L12.6 6.6 C14.5 5.9 17.5 5.9 19.4 6.6 L21.4 4.8 L22.2 7.6 C23.6 8.8 24.3 10.5 24.3 13 L24.3 16 C24.3 18.6 22.8 20.4 20.5 20.4 L11.5 20.4 C9.2 20.4 7.3 18.6 7.3 16 L7.3 13 C7.3 10.5 8.4 8.8 9.8 7.6 Z"/>
<rect x="4.1" y="8.6" width="23.3" height="4.4" rx="2.2"/>
<path d="M11 19.8 L21 19.8 C22.6 21.3 23.6 23 23.6 25 L23.6 27 C23.6 29 22.8 30.4 21.5 30.4 L17.6 30.4 L17.4 28.3 L15.2 28.3 L15 30.4 L11 30.4 C9.8 30.4 8.8 29 8.8 27 L8.8 25 C8.8 23 9.6 21.3 11 19.8 Z"/>
</g></svg>
<div class="abs" style="left:1536.5px;top:662px;font-size:16.5px;color:rgba(255,255,255,0.68);line-height:22px;font-weight:700;letter-spacing:-0.3px">coinglass</div>
</body></html>
